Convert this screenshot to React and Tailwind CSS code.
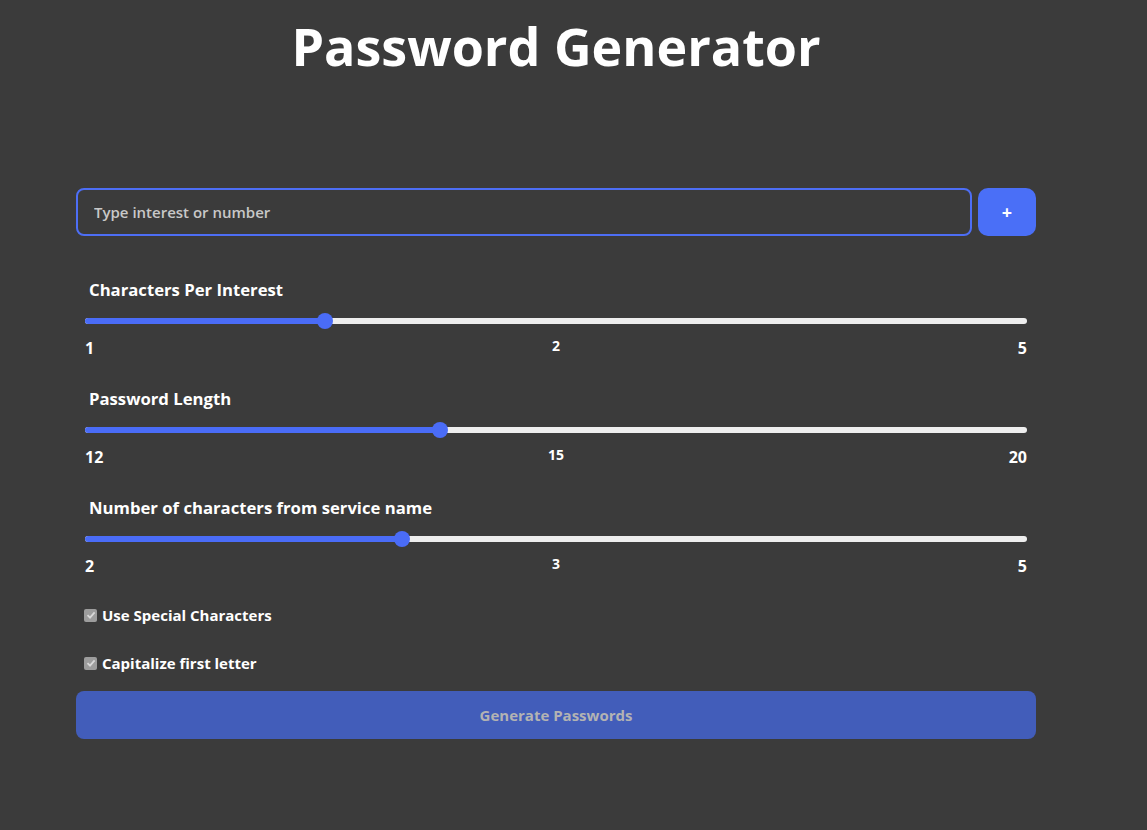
import { useState } from "react";

function Slider({ label, min, max, value }) {
  const pct = ((value - min) / (max - min)) * 100;
  return (
    <div className="flex flex-col">
      <div className="pl-[13px] text-[16.7px] leading-[20px] font-bold text-white">{label}</div>
      <div className="mx-[9px] mt-[13px] relative h-[16px] flex items-center">
        <div className="w-full h-[6px] rounded-full bg-[#eeeeee] overflow-hidden">
          <div className="h-full bg-[#4a6cf7]" style={{ width: `calc(8px + (100% - 16px) * ${pct / 100})` }} />
        </div>
        <div
          className="absolute top-0 w-[16px] h-[16px] rounded-full bg-[#4a6cf7]"
          style={{ left: `calc((100% - 16px) * ${pct / 100})` }}
        />
      </div>
      <div className="mx-[9px] mt-[9px] flex justify-between items-center h-[20px] font-bold text-white">
        <span className="text-[16px]">{min}</span>
        <span className="text-[14px] mb-[5px]">{value}</span>
        <span className="text-[16px]">{max}</span>
      </div>
    </div>
  );
}

function Check({ label }) {
  return (
    <label className="flex items-center h-[20px] pl-[8px] gap-[5px] text-[15px] font-bold text-white">
      <span className="w-[13px] h-[13px] rounded-[2px] bg-[#9d9d9d] flex items-center justify-center">
        <svg width="10" height="10" viewBox="0 0 10 10">
          <path d="M1.5 5.2 L4 7.6 L8.6 2.4" fill="none" stroke="#d9d9d9" strokeWidth="1.8" />
        </svg>
      </span>
      {label}
    </label>
  );
}

export default function App() {
  const [interest, setInterest] = useState("");

  return (
    <div
      className="min-h-[830px] bg-[#3b3b3b]"
      style={{ fontFamily: '"Open Sans", "Noto Sans", sans-serif' }}
    >
      <div className="w-[960px] ml-[76px] flex flex-col">
        <h1 className="text-center text-[52px] leading-[70px] font-bold text-white pt-[11px]">Password Generator</h1>

        <div className="mt-[107px] flex gap-[6px]">
          <input
            value={interest}
            onChange={(e) => setInterest(e.target.value)}
            placeholder="Type interest or number"
            className="flex-1 h-[48px] rounded-[8px] border-2 border-[#4d6ef5] bg-transparent px-[16px] text-[15px] font-semibold text-white placeholder:text-[#c8c8c8] outline-none"
          />
          <button className="w-[58px] h-[48px] rounded-[10px] bg-[#4a6ff7] text-white text-[18px] font-bold">+</button>
        </div>

        <div className="mt-[44px] flex flex-col gap-[31px]">
          <Slider label="Characters Per Interest" min={1} max={5} value={2} />
          <Slider label="Password Length" min={12} max={20} value={15} />
          <Slider label="Number of characters from service name" min={2} max={5} value={3} />
        </div>

        <div className="mt-[29px] flex flex-col gap-[28px]">
          <Check label="Use Special Characters" />
          <Check label="Capitalize first letter" />
        </div>

        <button className="mt-[18px] h-[48px] rounded-[8px] bg-[#425dba] text-[#b3b3b3] text-[15px] font-bold">
          Generate Passwords
        </button>
      </div>
    </div>
  );
}
